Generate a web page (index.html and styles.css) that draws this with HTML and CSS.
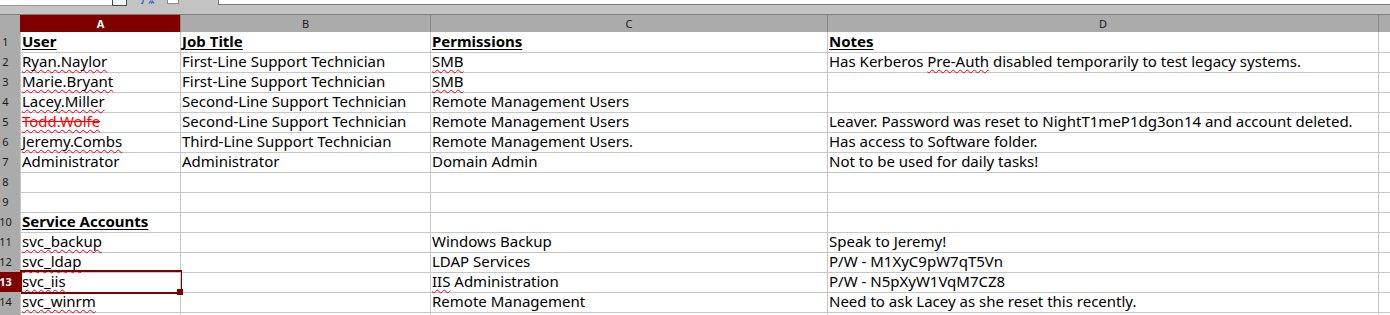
FILE: index.html
```html
<!DOCTYPE html>
<html lang="en">
<head>
<meta charset="utf-8">
<title>Sheet</title>
<link rel="stylesheet" href="styles.css">
</head>
<body>
<div class="app">
  <div class="toolbar">
    <div class="namebox"></div>
    <div class="namebtn"></div>
    <svg class="fx" width="18" height="4" viewBox="0 0 18 4" aria-hidden="true">
      <path d="M1 3.5 Q2.5 3.8 3 2 L3.4 0" stroke="#2f6fcf" stroke-width="1.4" fill="none"/>
      <path d="M9 3.5 L11 0.5 M14 3.5 L12 0.5 M11 3.5 L12.5 1.5" stroke="#2f6fcf" stroke-width="1.3" fill="none"/>
    </svg>
    <div class="tbicon"></div>
    <div class="formula"></div>
  </div>
  <div class="colheads">
    <div class="corner"></div>
    <div class="ch sel">A</div>
    <div class="ch">B</div>
    <div class="ch">C</div>
    <div class="ch">D</div>
    <div class="ch"></div>
  </div>
  <div class="grid">
    <div class="row"><div class="rh">1</div><div class="c"><b class="hd">User</b></div><div class="c"><b class="hd">Job Title</b></div><div class="c"><b class="hd">Permissions</b></div><div class="c"><b class="hd">Notes</b></div><div class="c"></div></div>
    <div class="row"><div class="rh">2</div><div class="c"><span class="sp">Ryan.Naylor</span></div><div class="c">First-Line Support Technician</div><div class="c"><span class="sp">SMB</span></div><div class="c">Has Kerberos <span class="sp">Pre-Auth</span> disabled temporarily to test legacy systems.</div><div class="c"></div></div>
    <div class="row"><div class="rh">3</div><div class="c"><span class="sp">Marie.Bryant</span></div><div class="c">First-Line Support Technician</div><div class="c"><span class="sp">SMB</span></div><div class="c"></div><div class="c"></div></div>
    <div class="row"><div class="rh">4</div><div class="c"><span class="sp">Lacey.Miller</span></div><div class="c">Second-Line Support Technician</div><div class="c">Remote Management Users</div><div class="c"></div><div class="c"></div></div>
    <div class="row"><div class="rh">5</div><div class="c"><span class="strike"><span class="sp">Todd.Wolfe</span></span></div><div class="c">Second-Line Support Technician</div><div class="c">Remote Management Users</div><div class="c">Leaver. Password was reset to NightT1meP1dg3on14 and account deleted.</div><div class="c"></div></div>
    <div class="row"><div class="rh">6</div><div class="c"><span class="sp">Jeremy.Combs</span></div><div class="c">Third-Line Support Technician</div><div class="c">Remote Management Users.</div><div class="c">Has access to Software folder.</div><div class="c"></div></div>
    <div class="row"><div class="rh">7</div><div class="c">Administrator</div><div class="c">Administrator</div><div class="c">Domain Admin</div><div class="c">Not to be used for daily tasks!</div><div class="c"></div></div>
    <div class="row"><div class="rh">8</div><div class="c"></div><div class="c"></div><div class="c"></div><div class="c"></div><div class="c"></div></div>
    <div class="row"><div class="rh">9</div><div class="c"></div><div class="c"></div><div class="c"></div><div class="c"></div><div class="c"></div></div>
    <div class="row"><div class="rh">10</div><div class="c"><b class="hd">Service Accounts</b></div><div class="c"></div><div class="c"></div><div class="c"></div><div class="c"></div></div>
    <div class="row"><div class="rh">11</div><div class="c"><span class="sp">svc_backup</span></div><div class="c"></div><div class="c">Windows Backup</div><div class="c">Speak to Jeremy!</div><div class="c"></div></div>
    <div class="row"><div class="rh">12</div><div class="c"><span class="sp">svc_ldap</span></div><div class="c"></div><div class="c">LDAP Services</div><div class="c">P/W - M1XyC9pW7qT5Vn</div><div class="c"></div></div>
    <div class="row"><div class="rh rsel">13</div><div class="c cur"><span class="sp">svc_iis</span></div><div class="c"></div><div class="c"><span class="sp">IIS</span> Administration</div><div class="c">P/W - N5pXyW1VqM7CZ8</div><div class="c"></div></div>
    <div class="row"><div class="rh">14</div><div class="c"><span class="sp">svc_winrm</span></div><div class="c"></div><div class="c">Remote Management</div><div class="c">Need to ask Lacey as she reset this recently.</div><div class="c"></div></div>
    <div class="row"><div class="rh"></div><div class="c"></div><div class="c"></div><div class="c"></div><div class="c"></div><div class="c"></div></div>
  </div>
</div>
</body>
</html>
```
FILE: styles.css
```css
html, body {
  margin: 0;
  padding: 0;
  background: #ffffff;
  overflow: hidden;
}
.app {
  width: 1390px;
  height: 315px;
  overflow: hidden;
  font-family: "Noto Sans", "Open Sans", sans-serif;
}
.toolbar {
  height: 14px;
  background: #c3c3c3;
  display: flex;
  align-items: flex-start;
  overflow: hidden;
}
.namebox {
  width: 112px;
  height: 5px;
  background: #ffffff;
  border-bottom: 1px solid #9a9a9a;
}
.namebtn {
  width: 13px;
  height: 5px;
  background: #f4f4f4;
  border: 1px solid #4a4a4a;
  border-top: none;
}
.fx {
  margin-left: 13px;
  display: block;
}
.tbicon {
  margin-left: 9px;
  width: 10px;
  height: 3px;
  background: #ffffff;
  border: 1px solid #8a8a8a;
  border-top: none;
}
.formula {
  margin-left: 39px;
  flex: 1;
  height: 4px;
  background: #ffffff;
  border: 1px solid #7a7a7a;
  border-top: none;
  border-right: none;
}
.colheads {
  display: grid;
  grid-template-columns: 20px 160px 250px 397px 551px 12px;
  height: 17px;
  border-top: 1px solid #7e7e7e;
  background: #ababab;
}
.corner {
  background: #ababab;
}
.ch {
  border-left: 1px solid #8a8a8a;
  font-size: 11px;
  line-height: 17px;
  text-align: center;
  color: #1a1a1a;
}
.ch.sel {
  background: #800000;
  color: #ffffff;
  font-weight: bold;
  border-left-color: #800000;
}
.row {
  display: grid;
  grid-template-columns: 20px 160px 250px 397px 551px 12px;
  height: 20px;
}
.rh {
  background: #ababab;
  border-bottom: 1px solid #c4c4c4;
  font-size: 11px;
  line-height: 20px;
  color: #1a1a1a;
  width: 11px;
  padding-right: 9px;
  white-space: nowrap;
  display: flex;
  justify-content: center;
}
.rh.rsel {
  background: #800000;
  color: #ffffff;
  font-weight: bold;
}
.c {
  position: relative;
  border-left: 1px solid #c6c6c6;
  border-bottom: 1px solid #c6c6c6;
  font-size: 15px;
  line-height: 19px;
  padding-left: 1px;
  color: #000000;
  white-space: nowrap;
  overflow: visible;
}
.hd {
  font-weight: bold;
  text-decoration: underline;
  text-decoration-thickness: 1px;
  text-underline-offset: 2px;
}
.sp {
  text-decoration: underline wavy #e8001c;
  text-decoration-thickness: 1px;
  text-underline-offset: 2px;
  text-decoration-skip-ink: none;
}
.strike {
  color: #ff0000;
  text-decoration: line-through #ff0000;
  text-decoration-thickness: 1px;
}
.strike .sp {
  color: #ff0000;
}
.cur::after {
  content: "";
  position: absolute;
  left: -1px;
  top: -2px;
  right: -2px;
  bottom: -2px;
  border: 2px solid #800000;
  pointer-events: none;
}
.cur::before {
  content: "";
  position: absolute;
  right: -3px;
  bottom: -3px;
  width: 6px;
  height: 6px;
  background: #800000;
  z-index: 2;
}
```
